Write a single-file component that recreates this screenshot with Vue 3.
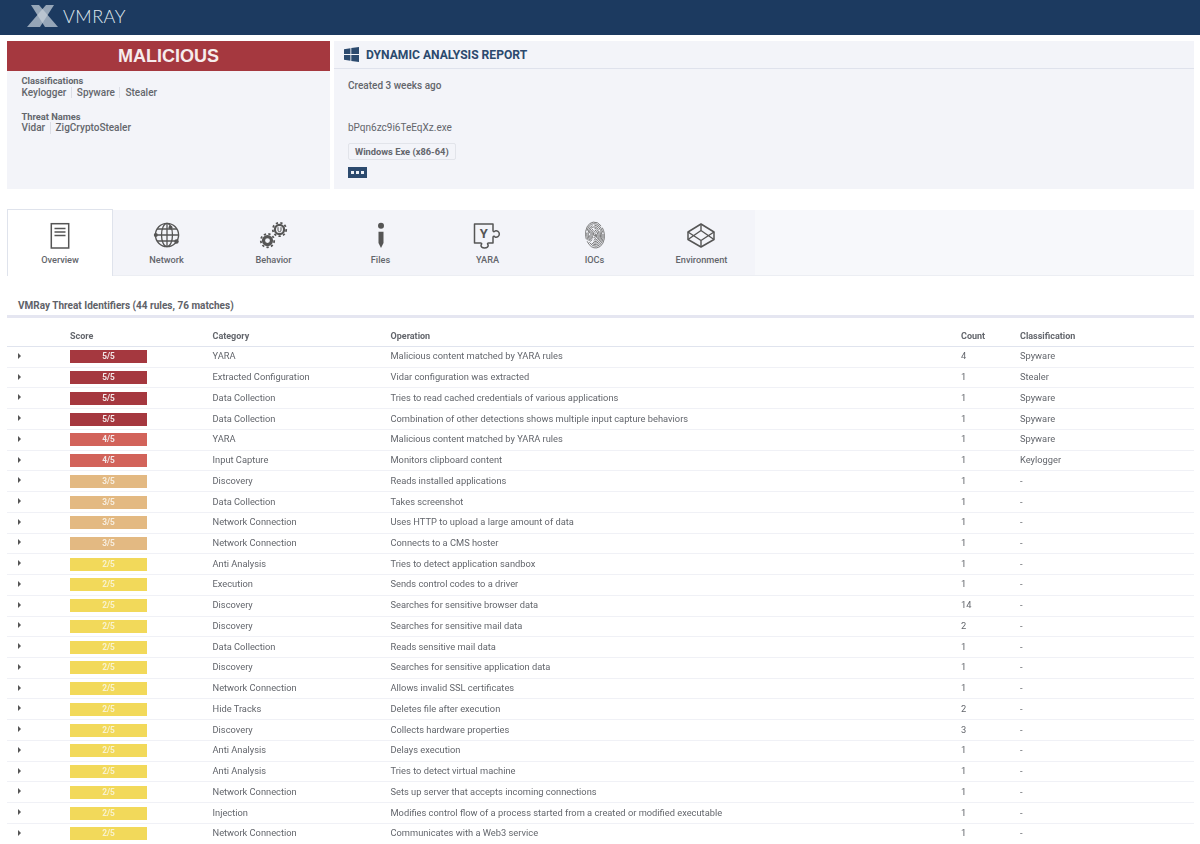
<script setup>
const tabs = [
  { label: 'Overview', icon: 'doc', active: true },
  { label: 'Network', icon: 'globe' },
  { label: 'Behavior', icon: 'gears' },
  { label: 'Files', icon: 'info' },
  { label: 'YARA', icon: 'puzzle' },
  { label: 'IOCs', icon: 'finger' },
  { label: 'Environment', icon: 'box' }
]
const rows = [
  [5, 'YARA', 'Malicious content matched by YARA rules', 4, 'Spyware'],
  [5, 'Extracted Configuration', 'Vidar configuration was extracted', 1, 'Stealer'],
  [5, 'Data Collection', 'Tries to read cached credentials of various applications', 1, 'Spyware'],
  [5, 'Data Collection', 'Combination of other detections shows multiple input capture behaviors', 1, 'Spyware'],
  [4, 'YARA', 'Malicious content matched by YARA rules', 1, 'Spyware'],
  [4, 'Input Capture', 'Monitors clipboard content', 1, 'Keylogger'],
  [3, 'Discovery', 'Reads installed applications', 1, '-'],
  [3, 'Data Collection', 'Takes screenshot', 1, '-'],
  [3, 'Network Connection', 'Uses HTTP to upload a large amount of data', 1, '-'],
  [3, 'Network Connection', 'Connects to a CMS hoster', 1, '-'],
  [2, 'Anti Analysis', 'Tries to detect application sandbox', 1, '-'],
  [2, 'Execution', 'Sends control codes to a driver', 1, '-'],
  [2, 'Discovery', 'Searches for sensitive browser data', 14, '-'],
  [2, 'Discovery', 'Searches for sensitive mail data', 2, '-'],
  [2, 'Data Collection', 'Reads sensitive mail data', 1, '-'],
  [2, 'Discovery', 'Searches for sensitive application data', 1, '-'],
  [2, 'Network Connection', 'Allows invalid SSL certificates', 1, '-'],
  [2, 'Hide Tracks', 'Deletes file after execution', 2, '-'],
  [2, 'Discovery', 'Collects hardware properties', 3, '-'],
  [2, 'Anti Analysis', 'Delays execution', 1, '-'],
  [2, 'Anti Analysis', 'Tries to detect virtual machine', 1, '-'],
  [2, 'Network Connection', 'Sets up server that accepts incoming connections', 1, '-'],
  [2, 'Injection', 'Modifies control flow of a process started from a created or modified executable', 1, '-'],
  [2, 'Network Connection', 'Communicates with a Web3 service', 1, '-']
]
const fingerArcs = [
  [9.4, 13, '30 2'],
  [8.1, 11.4, '24 2 8 2'],
  [6.8, 9.8, '18 2'],
  [5.5, 8.2, '14 2 6 2'],
  [4.2, 6.6, '11 2'],
  [2.9, 5, '8 1.5'],
  [1.6, 3.4, '6 1.5'],
  [0.5, 1.8, '4 1']
]
</script>

<template>
  <div class="page">
    <header class="topbar">
      <svg class="logo" width="31" height="22" viewBox="0 0 31 22">
        <polygon points="4,0 12,0 31,22 18,22" fill="#c6d0d9" opacity="0.72" />
        <polygon points="27,0 19,0 0,22 13,22" fill="#c6d0d9" opacity="0.72" />
      </svg>
      <span class="wordmark">VMRAY</span>
    </header>

    <section class="summary">
      <div class="verdict">
        <div class="banner">MALICIOUS</div>
        <div class="verdict-body">
          <div class="group">
            <div class="group-title">Classifications</div>
            <div class="tags"><span>Keylogger</span><span>Spyware</span><span>Stealer</span></div>
          </div>
          <div class="group">
            <div class="group-title">Threat Names</div>
            <div class="tags"><span>Vidar</span><span>ZigCryptoStealer</span></div>
          </div>
        </div>
      </div>
      <div class="report">
        <div class="report-head">
          <svg width="15" height="15" viewBox="0 0 15 15" fill="#2c4a6e">
            <path d="M0 2.2 6.4 1.2V7H0ZM7.3 1.1 15 0V7H7.3ZM0 7.9H6.4V13.8L0 12.8ZM7.3 7.9H15V15L7.3 13.9Z" />
          </svg>
          <h1>DYNAMIC ANALYSIS REPORT</h1>
        </div>
        <div class="report-body">
          <div class="created">Created 3 weeks ago</div>
          <div class="filename">bPqn6zc9i6TeEqXz.exe</div>
          <div class="filetype">Windows Exe (x86-64)</div>
          <div class="more"><i></i><i></i><i></i></div>
        </div>
      </div>
    </section>

    <nav class="tabs">
      <div v-for="t in tabs" :key="t.label" class="tab" :class="{ active: t.active }">
        <svg width="30" height="30" viewBox="0 0 30 30" fill="none" stroke="#555" stroke-width="1.3">
          <g v-if="t.icon === 'doc'">
            <rect x="6.3" y="3.7" width="17.4" height="24.3" stroke-width="1.5" />
            <path d="M9.5 8.5h11M9.5 12h11M9.5 15.500h11" />
          </g>
          <g v-else-if="t.icon === 'globe'">
            <circle cx="15" cy="15" r="11.6" stroke-width="1.4" />
            <ellipse cx="15" cy="15" rx="5.5" ry="11.6" />
            <path d="M15 3.4v23.2M3.4 15h23.2M5 9h20M5 21h20" />
            <circle cx="3.8" cy="15" r="2" fill="#555" stroke="none" />
            <circle cx="18.5" cy="7.5" r="2" fill="#555" stroke="none" />
            <circle cx="24.5" cy="21.5" r="2.2" fill="#555" stroke="none" />
          </g>
          <g v-else-if="t.icon === 'gears'">
            <circle cx="8.5" cy="20.600" r="4" stroke-width="3.2" />
            <circle cx="8.5" cy="20.600" r="6.700" stroke-width="1.800" stroke-dasharray="2.300 2.300" />
            <circle cx="20.500" cy="9.500" r="4.600" stroke-width="2.200" />
            <circle cx="20.500" cy="9.500" r="6.700" stroke-width="1.800" stroke-dasharray="2.300 2.300" />
            <path d="M19 7.200v3a1.500 1.500 0 0 0 3 0v-3" stroke-width="1" />
          </g>
          <g v-else-if="t.icon === 'info'">
            <circle cx="15" cy="5.700" r="3" fill="#555" stroke="none" />
            <path d="M12.500 11.700h5V23L15 28l-2.500-5Z" fill="#555" stroke="none" />
          </g>
          <g v-else-if="t.icon === 'puzzle'">
            <path d="M1.500 4H20V10.500C20 12 21.500 12 22 11A3.200 3.200 0 1 1 22 17C21.500 16 20 16 20 17.500V23H15.500C14 23 14.500 24.500 15.200 25A3.600 3 0 1 1 8 25C8.700 24.500 9.200 23 7.700 23H1.500Z" stroke-width="1.500" stroke-linejoin="round" />
            <text x="10.700" y="18" text-anchor="middle" class="yara-y" fill="#555" stroke="none">Y</text>
          </g>
          <g v-else-if="t.icon === 'finger'" stroke="#666" stroke-width="0.800">
            <ellipse
              v-for="(a, idx) in fingerArcs"
              :key="idx"
              cx="15"
              cy="15"
              :rx="a[0]"
              :ry="a[1]"
              :stroke-dasharray="a[2]"
              transform="rotate(-8 15 15)"
            />
          </g>
          <g v-else>
            <path d="M14 4 27 12V19.500L14 27 1 19.500V12Z" stroke-width="1.500" stroke-linejoin="round" />
            <path d="M1 12 14 20.500 27 12M1 19.500 14 10.500 27 19.500M14 4V10.500M14 20.500V27" stroke-width="1.400" />
          </g>
        </svg>
        <span>{{ t.label }}</span>
      </div>
      <div class="tab-rest"></div>
    </nav>

    <h2 class="section-title">VMRay Threat Identifiers (44 rules, 76 matches)</h2>

    <div class="table">
      <div class="row head">
        <div></div><div>Score</div><div>Category</div><div>Operation</div><div>Count</div><div>Classification</div>
      </div>
      <div v-for="(r, i) in rows" :key="i" class="row">
        <div class="arrow"></div>
        <div class="bar" :class="'s' + r[0]">{{ r[0] }}/5</div>
        <div>{{ r[1] }}</div>
        <div>{{ r[2] }}</div>
        <div>{{ r[3] }}</div>
        <div>{{ r[4] }}</div>
      </div>
    </div>
  </div>
</template>

<style>
html, body { margin: 0; background: #fff; }
</style>

<style scoped>
.page {
  width: 1200px;
  height: 844px;
  overflow: hidden;
  font-family: Roboto, "Liberation Sans", sans-serif;
  font-size: 9.3px;
  color: #63666c;
  background: #fff;
}
.topbar {
  height: 35px;
  background: #1c3a60;
  display: flex;
  align-items: center;
  padding-left: 27px;
  gap: 5px;
  box-sizing: border-box;
}
.logo { margin-top: -4px; }
.wordmark {
  font-family: Lato, sans-serif;
  font-weight: 300;
  font-size: 18px;
  letter-spacing: 0.5px;
  color: #dfe7ee;
  margin-top: -4px;
}
.summary {
  display: flex;
  gap: 4px;
  margin: 6px 6px 0 7px;
  height: 148px;
}
.verdict { width: 323px; background: #f3f4f9; }
.banner {
  height: 30px;
  background: #a5383f;
  color: #f6ecec;
  font-family: "Liberation Sans", sans-serif;
  font-weight: 700;
  font-size: 18px;
  line-height: 30px;
  text-align: center;
}
.verdict-body { padding: 4px 0 0 14.500px; }
.group { margin-bottom: 12.500px; line-height: 11.500px; }
.group-title { font-weight: 700; color: #63666c; }
.tags { display: flex; font-weight: 500; font-size: 10px; }
.tags span { padding-right: 4.500px; margin-right: 5px; border-right: 1px solid #dcdee6; }
.tags span:last-child { border: 0; }
.report { flex: 1; background: #f3f4f9; }
.report-head {
  height: 27px;
  display: flex;
  align-items: center;
  gap: 7px;
  padding-left: 10px;
  border-bottom: 1.500px solid #dfe2ec;
}
.report-head h1 {
  margin: 0;
  font-size: 12.100px;
  font-weight: 700;
  color: #2c4a6e;
}
.report-body { padding: 11px 0 0 14px; font-weight: 500; font-size: 10px; }
.created { line-height: 12px; }
.filename { margin-top: 30px; line-height: 12px; font-weight: 400; font-size: 10px; }
.filetype {
  display: inline-block;
  margin-top: 9px;
  padding: 0 6px;
  height: 17px;
  line-height: 15px;
  border: 1px solid #e2e4ea;
  border-radius: 2px;
  font-size: 9.300px;
  font-weight: 700;
  box-sizing: border-box;
}
.more {
  width: 19px;
  height: 11px;
  background: #2c4a6e;
  display: flex;
  align-items: center;
  justify-content: center;
  gap: 2px;
  margin-top: 7px;
}
.more i { width: 3px; height: 3px; background: #eef1f6; }
.tabs {
  display: flex;
  margin: 21px 6px 0 7px;
  height: 66px;
  background: #f3f4f9;
  border-bottom: 1px solid #eceef3;
  box-sizing: border-box;
}
.tab {
  width: 107px;
  display: flex;
  flex-direction: column;
  align-items: center;
  padding-top: 10px;
  box-sizing: border-box;
  font-size: 9.200px;
  font-weight: 500;
  color: #63666c;
}
.tab svg { margin-bottom: 4px; }
.tab.active {
  width: 106px;
  height: 67px;
  margin-top: -1px;
  background: #fff;
  border: 1px solid #dfe3ec;
  border-bottom: 0;
}
.tab-rest { flex: 1; background: #f7f8fb; }
.section-title {
  margin: 23px 6px 0 7px;
  padding: 0 0 3px 11px;
  font-size: 10px;
  line-height: 13px;
  font-weight: 700;
  color: #5f6268;
  border-bottom: 3px solid #e5e6f1;
}
.table { margin: 10px 6px 0 7px; will-change: opacity; }
.row {
  display: grid;
  grid-template-columns: 63px 142.500px 178px 570.500px 59px 1fr;
  align-items: center;
  height: 20.740px;
  padding-bottom: 1px;
  border-bottom: 1px solid #f0f1f6;
  box-sizing: border-box;
  line-height: 12px;
}
.row.head {
  height: 19px;
  font-weight: 700;
  font-size: 9px;
  color: #63666c;
  border-bottom: 1.500px solid #e0e4ee;
  padding-bottom: 2px;
}
.arrow {
  width: 0;
  height: 0;
  margin-left: 11px;
  margin-top: -1px;
  border-left: 3.500px solid #555;
  border-top: 3px solid transparent;
  border-bottom: 3px solid transparent;
}
.bar {
  width: 77px;
  height: 13px;
  margin-top: 1px;
  line-height: 13px;
  text-align: center;
  font-size: 8.300px;
  font-weight: 700;
  color: #f3e7e7;
}
.s5 { background: #a5383f; }
.s4 { background: #d2635a; }
.s3 { background: #e3b982; color: #f7eee0; }
.s2 { background: #f2d95a; color: #f8f2cf; }
.yara-y { font-family: Roboto, sans-serif; font-weight: 700; font-size: 13px; }
</style>
